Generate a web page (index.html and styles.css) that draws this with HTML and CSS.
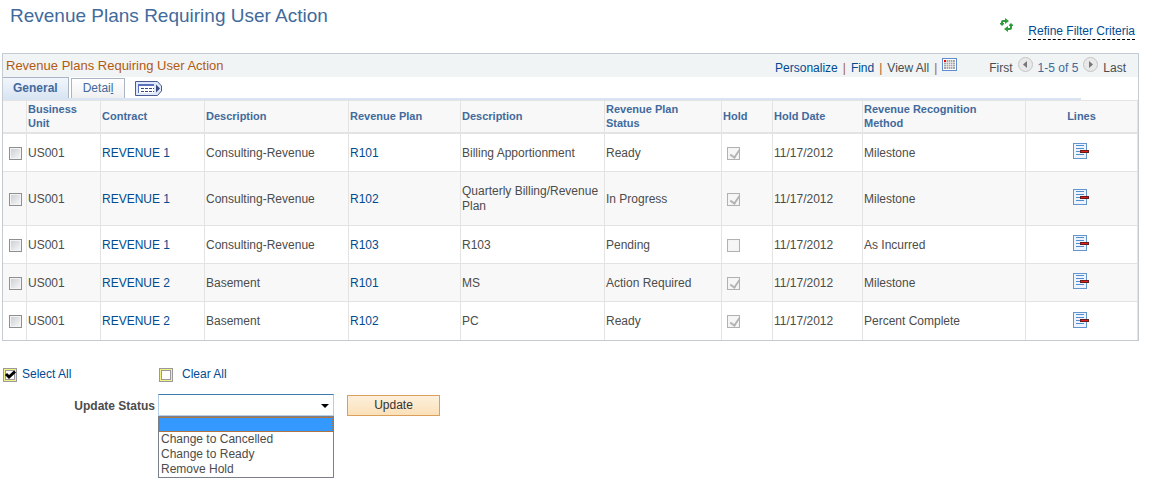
FILE: index.html
```html
<!DOCTYPE html>
<html lang="en">
<head>
    <meta charset="UTF-8">
    <meta name="viewport" content="width=device-width, initial-scale=1.0">
    <title>Revenue Plans Requiring User Action</title>
    <link rel="stylesheet" href="styles.css">
</head>
<body>
    <!-- icons shared by the grid rows -->
    <svg class="defs" width="0" height="0">
        <symbol id="iconLines" viewBox="0 0 17 16">
            <rect x="0.5" y="0.5" width="13" height="15" fill="#edf4ff" stroke="#6496cd"/>
            <path d="M3 2.5h8M3 5.5h8M3 8.5h8M3 11.5h8" stroke="#508fcb"/>
            <rect x="7.5" y="7.5" width="8" height="2" fill="#e02020" stroke="#681c1c"/>
        </symbol>
    </svg>

    <header class="page-header">
        <h1>Revenue Plans Requiring User Action</h1>
        <div class="filter">
            <svg width="13" height="14" viewBox="0 0 13 14">
                <path d="M2 7V4Q2 3 3 3H6M11 7V10Q11 11 10 11H7" fill="none" stroke="#2d9c3a" stroke-width="2"/>
                <path d="M5 0L9 3 5 6zM8 8L4 11 8 14zM0 5h4v1L2 8 0 6zM9 8h4V7L11 5 9 7z" fill="#2d9c3a"/>
            </svg>
            <a href="#" class="refine">Refine Filter Criteria</a>
        </div>
    </header>

    <section class="grid">
        <div class="grid-bar">
            <h2>Revenue Plans Requiring User Action</h2>
            <div class="grid-tools">
                <a href="#">Personalize</a><i>|</i><a href="#">Find</a><i>|</i><span>View All</span><i>|</i>
                <svg class="raised" width="15" height="13" viewBox="0 0 15 13">
                    <rect x="0.5" y="0.5" width="14" height="12" fill="#fff" stroke="#5f8dd0"/>
                    <rect x="2" y="2" width="11" height="9" fill="#a5a5a5"/>
                    <path d="M2 4.500h11M2 6.500h11M2 8.500h11M4.500 2v9M6.500 2v9M8.500 2v9M10.500 2v9" stroke="#ececec" stroke-width="0.700"/>
                    <rect x="2" y="2" width="2" height="2" fill="#f00"/>
                </svg>
            </div>
            <div class="grid-pager">
                <span>First</span>
                <svg class="raised" width="15" height="15" viewBox="0 0 15 15">
                    <circle cx="7.5" cy="7.5" r="7" fill="#e9e9e9" stroke="#c4c4c4"/>
                    <path d="M5 7.500L9 4v7z" fill="#777"/>
                </svg>
                <span class="range">1-5 of 5</span>
                <svg class="raised" width="15" height="15" viewBox="0 0 15 15">
                    <circle cx="7.5" cy="7.5" r="7" fill="#e9e9e9" stroke="#c4c4c4"/>
                    <path d="M10 7.500L6 4v7z" fill="#777"/>
                </svg>
                <span>Last</span>
            </div>
        </div>

        <div class="tabs">
            <button type="button" class="tab active">General</button>
            <button type="button" class="tab">Detai<u>l</u></button>
            <svg width="27" height="15" viewBox="0 0 27 15">
                <path d="M0.500 0.500H22.500L26.500 5V10L22.500 14.500H0.500Z" fill="#dfe9fb" stroke="#4c5a92"/>
                <rect x="3" y="3" width="16" height="9" fill="#fff"/>
                <path d="M3 4h16" stroke="#5a6fc0" stroke-width="2"/>
                <path d="M3.500 3v9" stroke="#5a6fc0"/>
                <path d="M6 7.500h13M6 10.500h13" stroke="#3a4780" stroke-dasharray="3 1"/>
                <path d="M21 3.500L25 7.500 21 11.500z" fill="#3a4780"/>
            </svg>
        </div>

        <table>
            <colgroup>
                <col class="c-pick"><col class="c-unit"><col class="c-contract"><col><col class="c-plan"><col>
                <col class="c-status"><col class="c-hold"><col class="c-date"><col class="c-method"><col class="c-lines">
            </colgroup>
            <thead>
                <tr>
                    <th></th>
                    <th>Business<br>Unit</th>
                    <th>Contract</th>
                    <th>Description</th>
                    <th>Revenue Plan</th>
                    <th>Description</th>
                    <th>Revenue Plan<br>Status</th>
                    <th>Hold</th>
                    <th>Hold Date</th>
                    <th>Revenue Recognition<br>Method</th>
                    <th class="center">Lines</th>
                </tr>
            </thead>
            <tbody>
                <tr>
                    <td class="pick"><input type="checkbox" aria-label="Select row 1"></td>
                    <td>US001</td>
                    <td><a href="#">REVENUE 1</a></td>
                    <td>Consulting-Revenue</td>
                    <td><a href="#">R101</a></td>
                    <td>Billing Apportionment</td>
                    <td>Ready</td>
                    <td><input type="checkbox" class="hold" aria-label="Hold" checked disabled></td>
                    <td>11/17/2012</td>
                    <td>Milestone</td>
                    <td class="center"><a href="#" aria-label="Lines"><svg width="17" height="16"><use href="#iconLines"/></svg></a></td>
                </tr>
                <tr class="tall">
                    <td class="pick"><input type="checkbox" aria-label="Select row 2"></td>
                    <td>US001</td>
                    <td><a href="#">REVENUE 1</a></td>
                    <td>Consulting-Revenue</td>
                    <td><a href="#">R102</a></td>
                    <td>Quarterly Billing/Revenue Plan</td>
                    <td>In Progress</td>
                    <td><input type="checkbox" class="hold" aria-label="Hold" checked disabled></td>
                    <td>11/17/2012</td>
                    <td>Milestone</td>
                    <td class="center"><a href="#" aria-label="Lines"><svg width="17" height="16"><use href="#iconLines"/></svg></a></td>
                </tr>
                <tr>
                    <td class="pick"><input type="checkbox" aria-label="Select row 3"></td>
                    <td>US001</td>
                    <td><a href="#">REVENUE 1</a></td>
                    <td>Consulting-Revenue</td>
                    <td><a href="#">R103</a></td>
                    <td>R103</td>
                    <td>Pending</td>
                    <td><input type="checkbox" class="hold" aria-label="Hold" disabled></td>
                    <td>11/17/2012</td>
                    <td>As Incurred</td>
                    <td class="center"><a href="#" aria-label="Lines"><svg width="17" height="16"><use href="#iconLines"/></svg></a></td>
                </tr>
                <tr>
                    <td class="pick"><input type="checkbox" aria-label="Select row 4"></td>
                    <td>US001</td>
                    <td><a href="#">REVENUE 2</a></td>
                    <td>Basement</td>
                    <td><a href="#">R101</a></td>
                    <td>MS</td>
                    <td>Action Required</td>
                    <td><input type="checkbox" class="hold" aria-label="Hold" checked disabled></td>
                    <td>11/17/2012</td>
                    <td>Milestone</td>
                    <td class="center"><a href="#" aria-label="Lines"><svg width="17" height="16"><use href="#iconLines"/></svg></a></td>
                </tr>
                <tr>
                    <td class="pick"><input type="checkbox" aria-label="Select row 5"></td>
                    <td>US001</td>
                    <td><a href="#">REVENUE 2</a></td>
                    <td>Basement</td>
                    <td><a href="#">R102</a></td>
                    <td>PC</td>
                    <td>Ready</td>
                    <td><input type="checkbox" class="hold" aria-label="Hold" checked disabled></td>
                    <td>11/17/2012</td>
                    <td>Percent Complete</td>
                    <td class="center"><a href="#" aria-label="Lines"><svg width="17" height="16"><use href="#iconLines"/></svg></a></td>
                </tr>
            </tbody>
        </table>
    </section>

    <div class="select-links">
        <a href="#" class="select-all">
            <svg width="14" height="14" viewBox="0 0 14 14">
                <rect x="0.5" y="0.5" width="13" height="13" fill="#fff" stroke="#999"/>
                <rect x="1.5" y="1.5" width="11" height="11" fill="none" stroke="#f3f08a"/>
                <rect x="2.5" y="2.5" width="9" height="9" fill="none" stroke="#999"/>
                <path d="M3 6L6 9 12 3.500" fill="none" stroke="#000" stroke-width="3"/>
            </svg>
            Select All
        </a>
        <a href="#" class="clear-all">
            <svg width="14" height="14" viewBox="0 0 14 14">
                <rect x="0.5" y="0.5" width="13" height="13" fill="#fff" stroke="#999"/>
                <rect x="1.5" y="1.5" width="11" height="11" fill="none" stroke="#f3f08a"/>
                <rect x="2.5" y="2.5" width="9" height="9" fill="none" stroke="#999"/>
            </svg>
            Clear All
        </a>
    </div>

    <form class="update">
        <label for="status">Update Status</label>
        <div class="status-box">
            <select id="status">
                <option></option>
                <option>Change to Cancelled</option>
                <option>Change to Ready</option>
                <option>Remove Hold</option>
            </select>
            <svg class="arrow" width="8" height="4" viewBox="0 0 8 4"><path d="M0 0h8L4 4z"/></svg>
            <ul class="options" role="listbox" aria-label="Update Status">
                <li class="current" role="option" aria-selected="true"></li>
                <li role="option">Change to Cancelled</li>
                <li role="option">Change to Ready</li>
                <li role="option">Remove Hold</li>
            </ul>
        </div>
        <button type="button" class="update-button">Update</button>
    </form>
</body>
</html>
```
FILE: styles.css
```css
* {
    box-sizing: border-box;
}
body {
    margin: 0;
    padding: 4px 12px 8px 2px;
    min-height: 480px;
    background-color: #fff;
    color: #4c4c4c;
    font-family: "Liberation Sans", Arial, sans-serif;
    font-size: 12px;
    line-height: 15px;
}
a {
    color: #004b91;
    text-decoration: none;
}
h1, h2 {
    margin: 0;
    font-weight: normal;
}
svg {
    display: block;
    flex: none;
}
.defs {
    position: absolute;
}
.page-header {
    display: flex;
    justify-content: space-between;
    height: 49px;
    padding: 0 4px 0 8px;
}
h1 {
    color: #426a9c;
    font-size: 19px;
    line-height: 24px;
}
.filter {
    display: flex;
    align-items: flex-start;
    gap: 15px;
    padding-top: 14px;
}
.refine {
    margin-top: 6px;
    border-bottom: 1px dashed #000;
}

/* grid */
.grid {
    border: 1px solid #c5cbd2;
}
.grid-bar {
    display: flex;
    align-items: center;
    height: 23px;
    padding: 0 12px 0 3px;
    background-color: #f0f4f5;
}
h2 {
    flex: 1;
    color: #b35a12;
    font-size: 13px;
}
.grid-tools, .grid-pager {
    display: flex;
    align-items: center;
    padding-top: 5px;
}
.grid-tools {
    gap: 5px;
    margin-right: 32px;
}
.grid-tools i {
    color: #a0622d;
    font-style: normal;
}
.grid-pager {
    gap: 5px;
}
.range {
    color: #426a9c;
}
.raised {
    margin-bottom: 8px;
}
.tabs {
    display: flex;
    align-items: flex-end;
    gap: 2px;
    height: 23px;
    width: 95%;
    border-bottom: 2px solid #d9e5f3;
}
.tabs svg {
    margin: 0 0 2px 8px;
}
.tab {
    height: 20px;
    padding: 0 11px;
    border: 1px solid #a9b5c5;
    border-bottom: 0;
    background: linear-gradient(#fff, #f0f0f0);
    color: #426a9c;
    font: 12px/15px "Liberation Sans", Arial, sans-serif;
}
.tab.active {
    height: 21px;
    padding: 0 10px;
    border-left: 0;
    background: linear-gradient(#f2f6fc, #d9e5f3);
    font-weight: bold;
}
table {
    width: 100%;
    table-layout: fixed;
    border-collapse: separate;
    border-spacing: 0;
}
.c-pick { width: 24px; }
.c-unit { width: 74px; }
.c-contract { width: 104px; }
.c-plan { width: 112px; }
.c-status { width: 117px; }
.c-hold { width: 51px; }
.c-date { width: 90px; }
.c-method { width: 163px; }
.c-lines { width: 112px; }
th, td {
    padding: 0 1px;
    border-right: 1px solid #e3e3e3;
    text-align: left;
    vertical-align: middle;
}
th {
    height: 34px;
    padding-bottom: 2px;
    border-top: 1px solid #e3e3e3;
    border-bottom: 2px solid #e3e3e3;
    background-color: #f8f8f8;
    color: #426a9c;
    font-size: 11px;
    line-height: 14px;
}
td {
    height: 38px;
    padding-top: 1px;
    border-bottom: 1px solid #e3e3e3;
}
.tall td {
    height: 54px;
}
tbody tr:nth-child(even) {
    background-color: #f8f8f8;
}
tbody tr:last-child td {
    border-bottom: 0;
}
.center {
    text-align: center;
}
td.center {
    padding-bottom: 4px;
}
.center svg {
    margin: 0 auto;
}
input[type="checkbox"] {
    appearance: none;
    display: block;
    width: 13px;
    height: 13px;
    margin: 0;
    border: 1px solid #8e8f8f;
    background: linear-gradient(135deg, #c8ccd2, #fafafa);
    box-shadow: inset 0 0 0 1px #f4f4f4;
}
.pick input[type="checkbox"] {
    margin-left: 5px;
}
input[type="checkbox"].hold {
    margin-left: 4px;
    border-color: #b1b1b1;
    background: #f6f6f6;
}
.hold:checked::before {
    content: "";
    display: block;
    width: 4px;
    height: 8px;
    margin: 0 0 0 4px;
    border: solid #b4b4b4;
    border-width: 0 2px 2px 0;
    transform: rotate(35deg);
}

/* actions below the grid */
.select-links {
    display: flex;
    margin-top: 26px;
}
.select-links a {
    display: flex;
    align-items: center;
}
.select-all {
    width: 157px;
    padding-left: 1px;
    gap: 5px;
}
.clear-all {
    gap: 9px;
}
.update {
    display: flex;
    align-items: center;
    margin-top: 12px;
}
.update label {
    width: 156px;
    padding: 2px 3px 0 0;
    font-weight: bold;
    text-align: right;
}
.status-box {
    position: relative;
    width: 176px;
    margin-right: 13px;
}
select {
    appearance: none;
    display: block;
    width: 100%;
    height: 22px;
    border: 1px solid #b5cfe7;
    border-top-color: #3d7bad;
    border-radius: 0;
    background-color: #fff;
    font: 12px "Liberation Sans", Arial, sans-serif;
}
.arrow {
    position: absolute;
    right: 5px;
    top: 10px;
    pointer-events: none;
}
.options {
    position: absolute;
    top: 100%;
    left: 0;
    width: 100%;
    margin: 0;
    padding: 0;
    border: 1px solid #7a7f8a;
    background-color: #fff;
    list-style: none;
}
.options li {
    height: 15px;
    padding-left: 2px;
}
.options .current {
    border: 1px dotted #a87040;
    background-color: #3399ff;
}
.update-button {
    width: 93px;
    height: 21px;
    padding: 0;
    border: 1px solid #d9a05b;
    background: linear-gradient(#fdf0dc, #fbe0b8);
    color: #333;
    font: 12px "Liberation Sans", Arial, sans-serif;
}
```
